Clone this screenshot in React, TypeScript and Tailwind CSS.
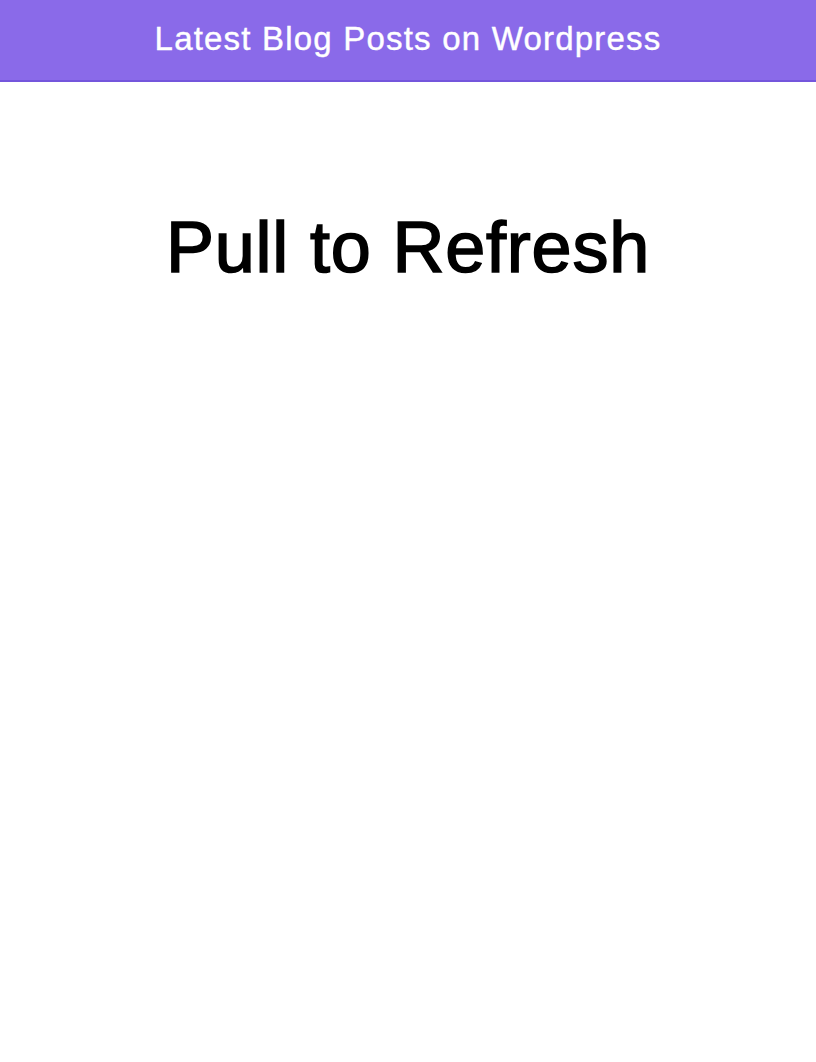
export default function App() {
  return (
    <div className="min-h-[1062px] w-full bg-white" style={{ fontFamily: '"Liberation Sans", Arial, sans-serif' }}>
      <header className="h-[82px] bg-[#8a6ae9] border-b-2 border-[#7456dc] flex items-center justify-center">
        <h1 className="text-white text-[33px] leading-none tracking-[1.2px] -mt-[4px] [-webkit-text-stroke:0.4px_white]">Latest Blog Posts on Wordpress</h1>
      </header>
      <div className="flex justify-center pt-[129px]">
        <h2 className="text-black text-[72px] leading-none tracking-[0.8px] [-webkit-text-stroke:1.6px_black]">Pull to Refresh</h2>
      </div>
    </div>
  );
}
